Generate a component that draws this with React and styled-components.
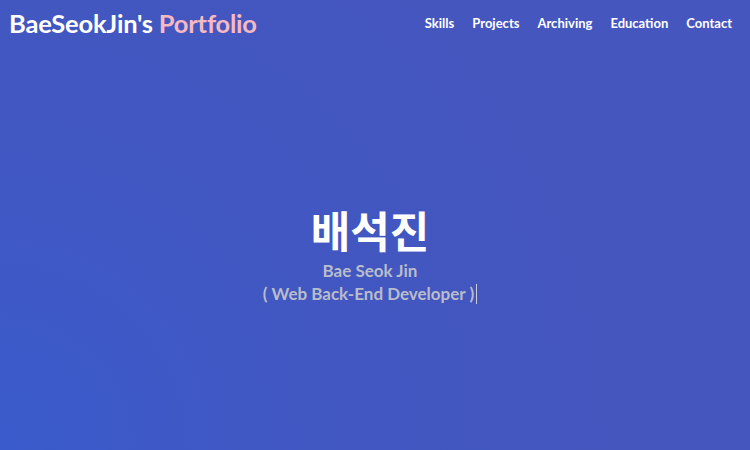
import React from 'react'
import styled, { createGlobalStyle } from 'styled-components'

const GlobalStyle = createGlobalStyle`
  * { box-sizing: border-box; }
  html, body { margin: 0; padding: 0; }
  body {
    font-family: 'Lato', 'Noto Sans CJK KR', sans-serif;
  }
`

const Page = styled.div`
  width: 750px;
  height: 450px;
  display: flex;
  flex-direction: column;
  background: radial-gradient(circle at 0% 100%, #3a5bcc 0%, #4157c2 35%, #4556bf 70%);
  overflow: hidden;
`

const Header = styled.header`
  height: 46px;
  display: flex;
  align-items: center;
  justify-content: space-between;
  padding: 0 18px 0 9px;
`

const Logo = styled.h1`
  margin: 0;
  font-size: 25.5px;
  font-weight: 700;
  color: #ffffff;
  letter-spacing: -0.2px;
  span { color: #f7b9c1; }
`

const Nav = styled.nav`
  display: flex;
  gap: 18px;
`

const NavItem = styled.a`
  font-size: 13px;
  font-weight: 700;
  color: #ffffff;
  text-decoration: none;
`

const Hero = styled.section`
  flex: 1;
  display: flex;
  flex-direction: column;
  align-items: center;
  padding: 153px 10px 0 0;
`

const Name = styled.h2`
  margin: 0;
  font-family: 'Noto Sans CJK KR', sans-serif;
  font-size: 43px;
  font-weight: 700;
  line-height: 60px;
  color: #ffffff;
`

const Sub = styled.p`
  margin: 0;
  font-size: 17px;
  font-weight: 700;
  line-height: 23px;
  color: #b9bcca;
  text-align: center;
`

const Cursor = styled.span`
  display: inline-block;
  width: 1px;
  height: 20px;
  margin-left: 2px;
  vertical-align: -4px;
  background: #c9ccd8;
`

export default function App() {
  const menu = ['Skills', 'Projects', 'Archiving', 'Education', 'Contact']
  return (
    <Page>
      <GlobalStyle />
      <Header>
        <Logo>BaeSeokJin's <span>Portfolio</span></Logo>
        <Nav>
          {menu.map((m) => (
            <NavItem key={m} href="#">{m}</NavItem>
          ))}
        </Nav>
      </Header>
      <Hero>
        <Name>배석진</Name>
        <Sub>Bae Seok Jin</Sub>
        <Sub>( Web Back-End Developer )<Cursor /></Sub>
      </Hero>
    </Page>
  )
}
